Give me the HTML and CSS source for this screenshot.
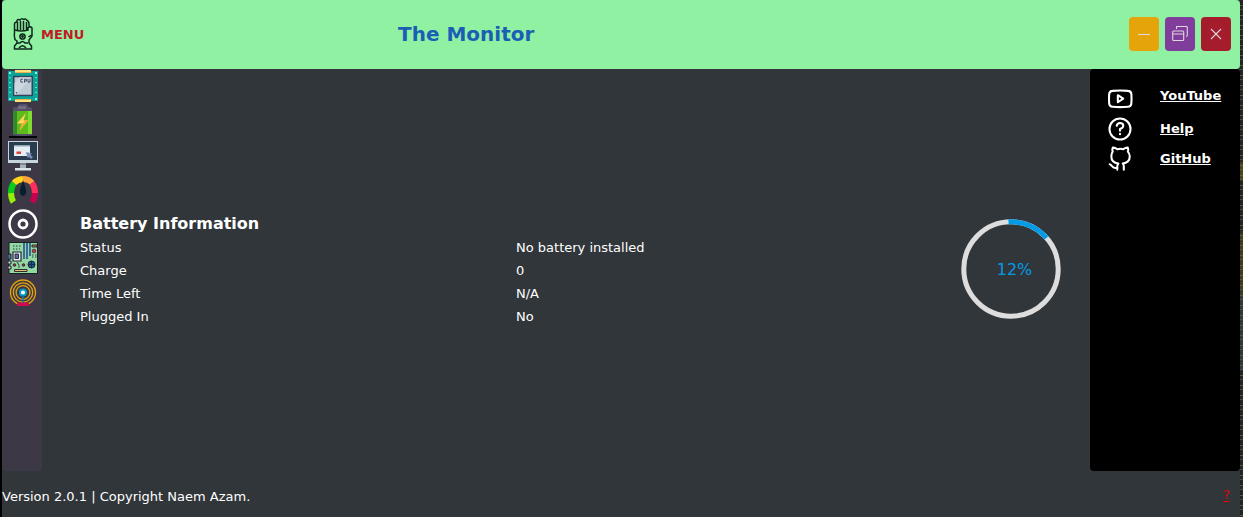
FILE: index.html
```html
<!DOCTYPE html>
<html lang="en">
<head>
<meta charset="utf-8">
<title>The Monitor</title>
<link rel="stylesheet" href="styles.css">
</head>
<body>
<div class="desktop">
<div class="app">
  <header class="header">
    <div class="menu">
      <svg class="hand" viewBox="0 0 20 32" fill="none" stroke="#10261b" stroke-width="1.5">
        <path d="M2 21.500Q1 18 1.500 15V6Q1.700 4 4 4V2.500Q5 .8 7 2Q8.500 0 10.500 1.500Q13 .3 14 2.500Q16 3 16 6V9Q18.500 8.500 19 10V18L16 22V25L18.500 28V31H1.500V28L4 25V23Z"/>
        <path d="M4.500 4V12M7.500 3V12M10.500 3V12M13.500 4V12M2 12Q8 14 15 12V9M4 25H7Q9.500 22 12 25H15M6 30Q9.500 25.500 13 30M18.500 17L15.500 19"/>
        <circle cx="9.500" cy="18.500" r="2.600"/><circle cx="9.500" cy="18.500" r=".7"/>
      </svg>
      <span>MENU</span>
    </div>
    <h1 class="title">The Monitor</h1>
    <div class="window-controls">
      <button class="control minimize" aria-label="Minimize"><svg viewBox="0 0 16 16"><path d="M2 8.500H14"/></svg></button>
      <button class="control restore" aria-label="Restore"><svg viewBox="0 0 16 16"><rect x=".7" y="5" width="11" height="9.500" rx="1"/><path d="M.7 8H11.700M4.500 3V1Q4.500 .5 5 .5H14.500Q15.300 .5 15.300 1.500V9.300Q15.300 10.500 14 10.500"/></svg></button>
      <button class="control close" aria-label="Close"><svg viewBox="0 0 16 16"><path d="M3 3L13 13M13 3L3 13"/></svg></button>
    </div>
  </header>
  <main class="body">
    <nav class="sidebar">
      <svg class="icon cpu" viewBox="0 0 30 33" preserveAspectRatio="none">
        <path fill="#08a696" d="M0 1H30V32H0Z"/><path fill="#ffe27a" d="M7 0H23V3H7ZM7 30H23V33H7Z"/><path fill="#efad55" d="M7 2H23V3H7ZM7 30H23V31H7Z"/>
        <path stroke="#91eee0" stroke-width=".8" d="M1 8H3M1 13H3M1 18H3M1 23H3M27 8H29M27 13H29M27 18H29M27 23H29"/>
        <circle cx="2" cy="3" r="1" fill="#caffff"/><circle cx="28" cy="3" r="1" fill="#caffff"/><circle cx="2" cy="30" r="1" fill="#caffff"/><circle cx="28" cy="30" r="1" fill="#caffff"/>
        <path fill="#35415d" d="M5 6H25V27H5Z"/><path fill="#bdcbd5" d="M6.500 7.500H23.500V25.500H6.500Z"/><path fill="#ccd7df" d="M6.500 25.500V14L12 7.500H23.500L8 25.500Z"/>
        <path fill="none" stroke="#39425e" stroke-width=".9" d="M15 9.500H12.800V12.500H15M16.500 13V9.500H18.500V11.500H16.500M20 9V12.500H22V9"/><circle cx="8.500" cy="23.500" r=".8" fill="#39425e"/>
      </svg>
      <svg class="icon battery" viewBox="0 0 30 34">
        <path fill="#57506a" d="M5 4Q5 3 9 3H10Q10 0 12 0H18Q20 0 20 3H21Q24 3 24 5V31Q15 33 5 31Z"/><path fill="#33892e" d="M5 7H9V30H5Z"/><path fill="#5dbb1a" d="M9 7H20V30H9Z"/><path fill="#80dc31" d="M20 7H24V30H20Z"/><path fill="#766c82" d="M10 2H18V5H10Z"/>
        <path fill="#ffd85a" d="M18 9L9 19.500H14L11.500 26.500L20.500 16H15.500Z"/><path fill="#f6a931" d="M20.500 16L11.500 26.500L14 19.500L17 18L15.500 16Z"/>
        <path stroke="#050407" stroke-width="2" d="M1 33H29"/>
      </svg>
      <svg class="icon monitor" viewBox="0 0 30 32">
        <path fill="#c6d4dc" d="M0 1H30V23H0Z"/><path fill="#293c50" d="M1 2H29V20H1Z"/><path fill="#e5eef3" d="M6 5H22V16H6Z"/><path fill="#8da6b3" d="M6 5H22V6.500H6Z"/><path fill="#d74439" d="M8.500 11.500H13V14H8.500Z"/><path fill="#7d8db9" d="M18 12L24 13.500L22.500 15L25 17L23 19L21 17L19.500 18Z"/><path fill="#a5b3b8" d="M12 23H18V28H12Z"/><path fill="#dae3e6" d="M7 28H23V30.500H7Z"/><path fill="#7c8a91" d="M12 23H18V25H12Z"/>
      </svg>
      <svg class="icon gauge" viewBox="0 0 30 30" fill="none" stroke-width="6">
        <path stroke="#97ef08" d="M5.500 26Q3.300 23 3 17"/><path stroke="#04cf18" d="M3 17Q3 11 6 7"/><path stroke="#ffd61b" d="M6 7Q9 3.500 15 3"/><path stroke="#ffa23b" d="M15 3Q21 3 24 7"/><path stroke="#ff2e5e" d="M24 7Q27 11 27 17"/><path stroke="#c70050" d="M27 17Q27 22 24 26"/><path fill="#061f2f" stroke="none" d="M15 4L18 14Q19 19 15 20Q11 19 12 14Z"/>
      </svg>
      <svg class="icon disc" viewBox="0 0 30 30" fill="none" stroke="#fff"><circle cx="15" cy="15" r="13.500" stroke-width="2.500"/><circle cx="15" cy="15" r="4" stroke-width="2.800"/></svg>
      <svg class="icon board" viewBox="0 0 30 32">
        <path fill="#93d7a2" stroke="#17231f" d="M1 .5H29.500V31.500H1Z"/><path fill="#5375a5" stroke="#18212c" d="M0 12H3V17H0Z"/><path fill="#dddce4" stroke="#18212c" d="M0 19H3V22H0ZM0 24H3V27H0Z"/>
        <path stroke="#294f97" stroke-width="1.600" d="M16 1V17M19 1V17M22 1V14"/><path stroke="#263a46" stroke-width="1" stroke-dasharray="1.500 1.500" d="M5 4H13M5 7H12M24 13H29M24 15H29"/>
        <path fill="#b2795b" stroke="#2b3030" d="M24 3H29V5H24Z"/><circle cx="26" cy="9" r="1.800" fill="#db394d" stroke="#4d3138"/>
        <path fill="#f0eef4" stroke="#1b2730" stroke-width="1.200" d="M5 10H13V19H5Z"/><path fill="#5670a0" stroke="#302d40" d="M7 12H10.500V16.500H7Z"/><circle cx="6.500" cy="23" r="1.300" fill="#9c354d" stroke="#3b2934"/><circle cx="15.500" cy="23" r="1.300" fill="#9c354d" stroke="#3b2934"/><circle cx="23.500" cy="22.500" r="3.500" fill="#265982" stroke="#152c49"/><path stroke="#152c49" d="M20 22.500H27M23.500 19V26"/><path stroke="#30423b" fill="none" d="M9 20L11 23V26"/><path fill="#e1bd76" stroke="#322d29" d="M6.500 27.500H19V29.500H6.500Z"/>
      </svg>
      <svg class="icon network" viewBox="0 0 30 30" fill="none"><g stroke="#e5a20b" stroke-width="1.350"><circle cx="15" cy="14.500" r="12.500"/><circle cx="15" cy="14.500" r="9.700"/><circle cx="15" cy="14.500" r="6.900"/></g><circle cx="15" cy="14.500" r="3.100" fill="#fff" stroke="#009bc8" stroke-width="2"/><path stroke="#087da0" stroke-width="1.600" d="M15 17V25"/><path fill="#d20b50" d="M9 28V26Q9 24.500 11 24.500H19Q21 24.500 21 26V28Z"/></svg>
    </nav>
    <section class="content">
      <div class="info">
        <h2>Battery Information</h2>
        <dl>
          <dt>Status</dt><dd>No battery installed</dd>
          <dt>Charge</dt><dd>0</dd>
          <dt>Time Left</dt><dd>N/A</dd>
          <dt>Plugged In</dt><dd>No</dd>
        </dl>
      </div>
      <svg class="progress" viewBox="0 0 100 100">
        <circle cx="50" cy="50" r="47.200" fill="none" stroke="#ddd" stroke-width="5"/>
        <path d="M47.500 2.860A47.200 47.200 0 0 1 85.500 18.900" fill="none" stroke="#039be5" stroke-width="5"/>
        <text x="53.500" y="56" text-anchor="middle">12%</text>
      </svg>
    </section>
    <aside class="links">
      <div class="link youtube"><svg viewBox="0 0 24 24"><path d="M5 4.500Q12 3.700 19.500 4.500Q22.300 4.700 22.500 7.500Q22.800 12 22.500 16Q22.300 18.900 19.500 19.100Q12 19.900 5 19.100Q2.200 18.900 2 16Q1.700 12 2 7.500Q2.200 4.700 5 4.500Z"/><path d="M10 8.500V15L15 11.700Z"/></svg><a>YouTube</a></div>
      <div class="link help"><svg viewBox="0 0 24 24"><circle cx="12" cy="12" r="9.700"/><path d="M9 9Q9.500 6.600 12 6.500Q15 6.500 15 9Q15 11 12 12V13.500M12 16.500V16.800"/></svg><a>Help</a></div>
      <div class="link github"><svg viewBox="0 0 24 24"><path d="M9.500 22V18.500Q9.700 17 10.500 16.100Q4 15.500 4 9.500Q4 7 5.300 5.200Q4.500 3.500 5.300 1.500Q7.500 1.400 9.500 3Q12.500 2.200 15 3Q17 1.400 19.200 1.500Q20 3.500 19.200 5.200Q21 7 21 9.500Q21 15.500 14.500 16.100Q15.500 17 15.500 18.500V22M9.500 20Q6 21 4.500 18.500Q3.500 17 2.500 16.800"/></svg><a>GitHub</a></div>
    </aside>
  </main>
  <footer class="footer"><span>Version 2.0.1 | Copyright Naem Azam.</span><a class="about">?</a></footer>
</div>
<div class="backdrop"></div>
</div>
</body>
</html>
```
FILE: styles.css
```css
* { box-sizing: border-box; }
body { margin: 0; background: #000; color: #fff; font: 13px "DejaVu Sans", sans-serif; overflow: hidden; }
h1, h2, dl, dd { margin: 0; }
.desktop { height: 517px; display: flex; padding-left: 2px; }
.app { width: 1238px; height: 517px; background: #31363a; display: flex; flex-direction: column; }
.header { height: 69px; flex: none; display: flex; align-items: center; background: #90f1a3; border-radius: 4px; padding: 0 9px 1px 11px; }
.menu { width: 385px; display: flex; align-items: center; gap: 8px; color: #c01c28; font-weight: bold; }
.menu span { padding-top: 1px; }
.hand { width: 20px; height: 32px; }
.title { color: #1a5fb4; font-size: 20px; line-height: 24px; }
.window-controls { margin-left: auto; display: flex; gap: 6px; }
.control { width: 30px; height: 34px; border: 0; border-radius: 4px; padding: 0; display: flex; align-items: center; justify-content: center; }
.control svg { width: 16px; height: 16px; fill: none; stroke: #dfd7dc; stroke-width: 1.1; }
.minimize { background: #e5a50a; }
.restore { background: #813d9c; }
.close { background: #a51d2d; }
.body { height: 402px; display: flex; flex: none; }
.sidebar { width: 40px; background: #3d3846; border-radius: 4px; padding: 1px 0 0 6px; display: flex; flex-direction: column; }
.icon { width: 30px; display: block; flex: none; }
.cpu { height: 32px; margin-bottom: 2px; }
.battery { height: 34px; margin-bottom: 2px; }
.monitor { height: 32px; margin-bottom: 4px; }
.gauge { height: 30px; margin-bottom: 3px; }
.disc { height: 30px; margin-bottom: 3px; }
.board { height: 32px; margin-bottom: 4px; }
.network { height: 30px; }
.content { width: 1048px; display: flex; align-items: center; justify-content: space-between; padding: 0 29px 0 38px; }
.info { width: 800px; }
.info h2 { font-size: 16px; line-height: 24px; }
.info dl { display: grid; grid-template-columns: 436px 1fr; grid-auto-rows: 23px; line-height: 23px; }
.progress { width: 100px; height: 100px; overflow: visible; margin-bottom: 2px; }
.progress text { font-size: 16px; fill: #039be5; }
.links { width: 150px; background: #000; border-radius: 4px; padding: 16px 0 0 17px; display: flex; flex-direction: column; }
.link { display: flex; align-items: center; gap: 27px; font-weight: bold; }
.link a { text-decoration: underline; text-underline-offset: 1px; line-height: 16px; }
.link svg { width: 26px; height: 26px; fill: none; stroke: #fff; stroke-width: 1.9; stroke-linecap: round; stroke-linejoin: round; flex: none; }
.youtube { height: 27px; }
.youtube a { margin-bottom: 6px; }
.help { height: 32px; padding-top: 2px; }
.github { height: 30px; }
.footer { height: 46px; display: flex; align-items: center; justify-content: space-between; padding: 4px 10px 0 0; }
.about { color: #e00008; line-height: 12px; margin-bottom: 2px; border-bottom: 1px solid #e00008; }
.backdrop { width: 3px; background: linear-gradient(transparent 0 160px, #8b701966 164px 180px, transparent 181px 230px, #7e671955 235px 288px, #4c606b55 300px 370px, transparent 371px), repeating-linear-gradient(#232323 0 5px, #466338 5px 6px, #252525 6px 9px, #3d5536 9px 10px); }
```
